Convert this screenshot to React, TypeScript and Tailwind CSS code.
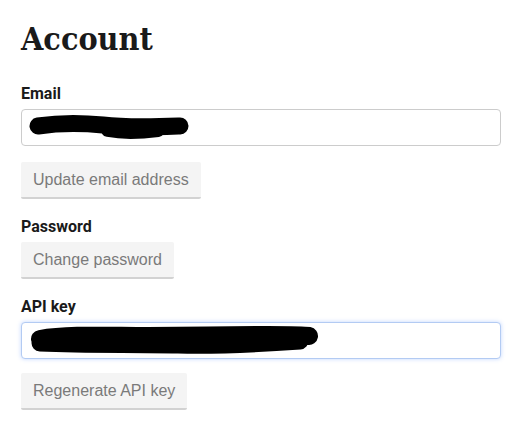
import React from "react";

// Redaction scribble for the email field
function EmailScribble() {
  return (
    <svg width="170" height="28" viewBox="0 0 170 28" className="block">
      <path
        d="M10 12 C 30 9, 55 9, 75 11 C 100 14, 125 13, 152 12"
        stroke="#000"
        strokeWidth="17"
        strokeLinecap="round"
        fill="none"
      />
      <path d="M80 16 C 95 19, 115 18, 130 16" stroke="#000" strokeWidth="14" strokeLinecap="round" fill="none" />
    </svg>
  );
}

// Redaction scribble for the API key field
function ApiScribble() {
  return (
    <svg width="300" height="32" viewBox="0 0 300 32" className="block">
      <path
        d="M12 14 C 40 9, 80 11, 120 11 C 160 11, 200 10, 240 10 C 260 10, 275 10, 281 11"
        stroke="#000"
        strokeWidth="18"
        strokeLinecap="round"
        fill="none"
      />
      <path d="M12 18 C 60 20, 100 19, 150 20 C 190 21, 230 19, 272 16" stroke="#000" strokeWidth="17" strokeLinecap="round" fill="none" />
    </svg>
  );
}

function Label({ children }: { children: React.ReactNode }) {
  return (
    <div className="text-[16px] leading-[24px] font-bold text-[#1a1a1a] mb-[3px] [font-family:Roboto,'Liberation_Sans',sans-serif]">
      {children}
    </div>
  );
}

function GrayButton({ children }: { children: React.ReactNode }) {
  return (
    <button className="h-[37px] px-3 bg-[#f4f4f4] border-b-2 border-[#d2d2d2] rounded-[2px] text-[16px] text-[#7a7a7a] [font-family:'Liberation_Sans',Arial,sans-serif]">
      {children}
    </button>
  );
}

export default function App(): JSX.Element {
  return (
    <div className="min-h-screen bg-white px-[21px] pt-[19px]">
      <h1 className="text-[32px] leading-[40px] font-bold text-[#1a1a1a] mb-[23px] [font-family:'DejaVu_Serif_Condensed','DejaVu_Serif',serif]">
        Account
      </h1>

      <Label>Email</Label>
      <div className="h-[37px] w-[480px] border border-[#cccccc] rounded-[4px] bg-white flex items-center pl-[6px]">
        <EmailScribble />
      </div>
      <div className="mt-4">
        <GrayButton>Update email address</GrayButton>
      </div>

      <div className="mt-4">
        <Label>Password</Label>
        <GrayButton>Change password</GrayButton>
      </div>

      <div className="mt-4">
        <Label>API key</Label>
        <div className="h-[37px] w-[480px] border border-[#b3cbf3] rounded-[4px] bg-white flex items-center pl-[6px] shadow-[0_0_4px_rgba(102,153,255,0.4)]">
          <ApiScribble />
        </div>
      </div>
      <div className="mt-[14px]">
        <GrayButton>Regenerate API key</GrayButton>
      </div>
    </div>
  );
}
